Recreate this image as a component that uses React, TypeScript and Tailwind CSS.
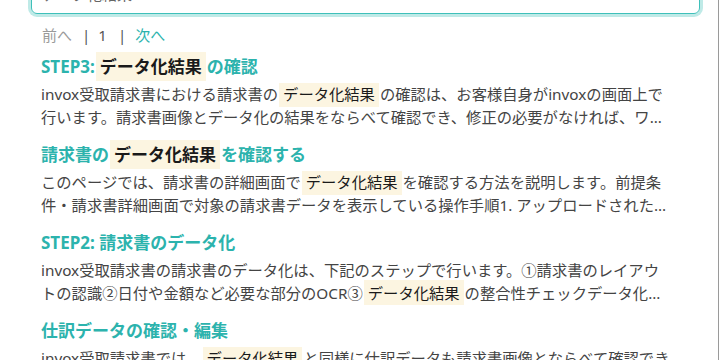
import React from "react";

const TEAL = "text-[#2cb3ad]";

function Mark({ children }: { children: React.ReactNode }) {
  return <mark className="bg-[#fcf5e1] text-[#1a1a1a] px-[4px] mx-[1px] py-[3px]">{children}</mark>;
}

type Result = { title: React.ReactNode; body: React.ReactNode };

const results: Result[] = [
  {
    title: (
      <>
        STEP3:<Mark>データ化結果</Mark>の確認
      </>
    ),
    body: (
      <>
        invox受取請求書における請求書の<Mark>データ化結果</Mark>の確認は、お客様自身がinvoxの画面上で行います。請求書画像とデータ化の結果をならべて確認でき、修正の必要がなければ、ワークフローを進めることができます。
      </>
    ),
  },
  {
    title: (
      <>
        請求書の<Mark>データ化結果</Mark>を確認する
      </>
    ),
    body: (
      <>
        このページでは、請求書の詳細画面で<Mark>データ化結果</Mark>を確認する方法を説明します。前提条件・請求書詳細画面で対象の請求書データを表示している操作手順1. アップロードされた請求書の詳細を開きます。
      </>
    ),
  },
  {
    title: <>STEP2: 請求書のデータ化</>,
    body: (
      <>
        invox受取請求書の請求書のデータ化は、下記のステップで行います。①請求書のレイアウトの認識②日付や金額など必要な部分のOCR③<Mark>データ化結果</Mark>の整合性チェックデータ化されたデータはオペレーターが確認します。
      </>
    ),
  },
  {
    title: <>仕訳データの確認・編集</>,
    body: (
      <>
        invox受取請求書では、<Mark>データ化結果</Mark>と同様に仕訳データも請求書画像とならべて確認できます。必要に応じて編集することもできます。
      </>
    ),
  },
];

export default function App() {
  return (
    <div
      className="w-[719px] h-[360px] overflow-hidden bg-white border-r border-[#9a9a9a]"
      style={{ fontFamily: '"Noto Sans", "Noto Sans CJK JP", sans-serif' }}
    >
      <div className="pl-[31px] pr-[20px]">
        {/* 検索ボックス */}
        <div className="-mt-[27px] h-[41px] w-[669px] rounded-[6px] border border-[#3fc0ba] ring-[3px] ring-[#bfeae7] flex items-end pb-[8px] pl-[10px] text-[15px] text-[#666]">
          データ化結果
        </div>

        {/* ページ送り */}
        <div className="mt-[11px] ml-[11px] flex items-center text-[15px] leading-[20px]">
          <span className="text-[#9a9a9a]">前へ</span>
          <span className="ml-[10px] text-[#555]">|</span>
          <span className="ml-[8px] text-[#555]">1</span>
          <span className="ml-[11px] text-[#555]">|</span>
          <span className="ml-[9px] text-[#2cb3ad]">次へ</span>
        </div>

        <div className="mt-[5px] ml-[10px] w-[632px] flex flex-col gap-[9px]">
          {results.map((r, i) => (
            <div key={i}>
              <div className={`${TEAL} font-bold text-[17px] leading-[33px]`}>{r.title}</div>
              <p className="text-[15.3px] leading-[23px] text-[#444] line-clamp-2">{r.body}</p>
            </div>
          ))}
        </div>
      </div>
    </div>
  );
}
